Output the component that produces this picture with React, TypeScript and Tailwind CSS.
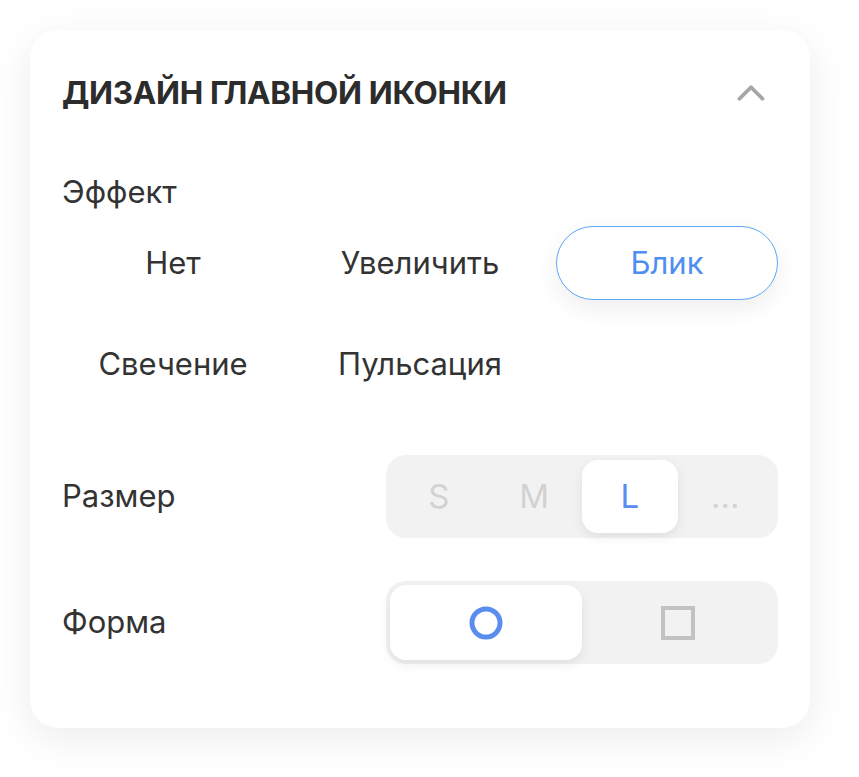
import { ChevronUp } from "lucide-react";

const effects = ["Нет", "Увеличить", "Блик", "Свечение", "Пульсация"];
const sizes = ["S", "M", "L", "..."];

export default function App() {
  const activeEffect = "Блик";
  const activeSize = "L";

  return (
    <div className="min-h-screen bg-white p-[30px] font-['Inter',sans-serif] text-[#2f2f2f]">
      <section className="w-[780px] rounded-[28px] bg-white px-[32px] pb-[64px] pt-[40px] shadow-[0_10px_40px_rgba(0,0,0,0.08)]">
        <header className="flex h-[46px] items-center justify-between">
          <h2 className="text-[31.5px] font-bold leading-[46px] tracking-[-0.01em] text-[#2c2c2c]">
            ДИЗАЙН ГЛАВНОЙ ИКОНКИ
          </h2>
          <ChevronUp className="mr-[4px] h-[46px] w-[46px] text-[#a6a6a6]" strokeWidth={2} />
        </header>

        <div className="mt-[58px] text-[31px] leading-[36px] text-[#333]">Эффект</div>

        <div className="mt-[16px] grid grid-cols-3 gap-x-[25px] gap-y-[27px]">
          {effects.map((item) => (
            <button
              key={item}
              className={
                item === activeEffect
                  ? "h-[74px] rounded-full border border-[#5ea8f5] bg-white text-[31px] text-[#4f8ef2] shadow-[0_8px_24px_rgba(0,0,0,0.07)]"
                  : "h-[74px] rounded-full text-[31px] text-[#333]"
              }
            >
              {item}
            </button>
          ))}
        </div>

        <div className="mt-[54px] flex items-center justify-between">
          <span className="text-[31px] text-[#333]">Размер</span>
          <div className="grid h-[83px] w-[392px] grid-cols-4 rounded-[20px] bg-[#f2f2f2] p-[5px]">
            {sizes.map((s) => (
              <div
                key={s}
                className={
                  s === activeSize
                    ? "flex items-center justify-center rounded-[16px] bg-white text-[33px] text-[#5b8def] shadow-[0_4px_12px_rgba(0,0,0,0.08)]"
                    : "flex items-center justify-center text-[33px] text-[#d2d2d2]"
                }
              >
                {s}
              </div>
            ))}
          </div>
        </div>

        <div className="mt-[43px] flex items-center justify-between">
          <span className="text-[31px] text-[#333]">Форма</span>
          <div className="grid h-[83px] w-[392px] grid-cols-2 rounded-[20px] bg-[#f2f2f2] p-[4px]">
            <div className="flex items-center justify-center rounded-[16px] bg-white shadow-[0_4px_12px_rgba(0,0,0,0.08)]">
              <svg width="34" height="34" viewBox="0 0 34 34">
                <circle cx="17" cy="17" r="14" fill="none" stroke="#5b8def" strokeWidth="5" />
              </svg>
            </div>
            <div className="flex items-center justify-center">
              <svg width="34" height="34" viewBox="0 0 34 34">
                <rect x="2" y="2" width="30" height="30" fill="none" stroke="#c2c2c2" strokeWidth="4" />
              </svg>
            </div>
          </div>
        </div>
      </section>
    </div>
  );
}
